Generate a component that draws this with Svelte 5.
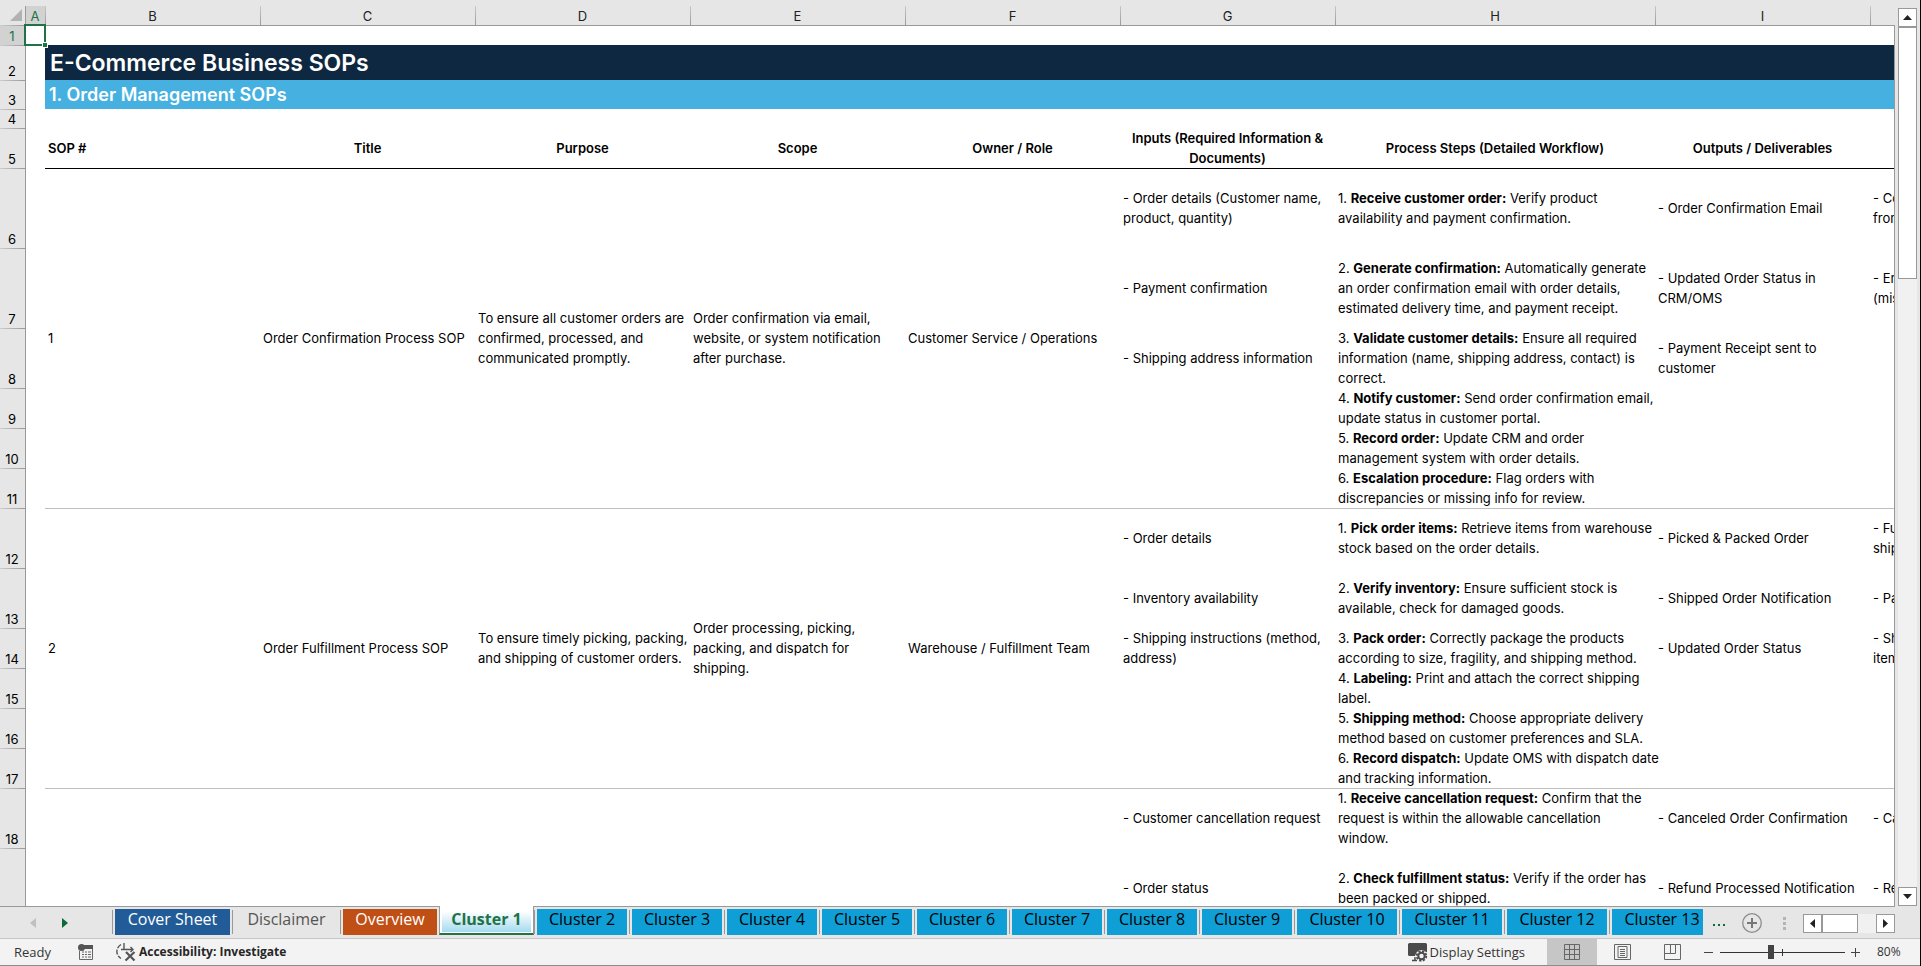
<script>
	const columns = [
		{ name: 'A', width: 20 },
		{ name: 'B', width: 215 },
		{ name: 'C', width: 215 },
		{ name: 'D', width: 215 },
		{ name: 'E', width: 215 },
		{ name: 'F', width: 215 },
		{ name: 'G', width: 215 },
		{ name: 'H', width: 320 },
		{ name: 'I', width: 215 },
		{ name: 'J', width: 215 }
	];

	const headings = [
		'Title',
		'Purpose',
		'Scope',
		'Owner / Role',
		'Inputs (Required Information &\nDocuments)',
		'Process Steps (Detailed Workflow)',
		'Outputs / Deliverables',
		''
	];

	// one entry per SOP; the first five cells are merged over all of its rows
	const sops = [
		{
			merged: [
				'1',
				'Order Confirmation Process SOP',
				'To ensure all customer orders are\nconfirmed, processed, and\ncommunicated promptly.',
				'Order confirmation via email,\nwebsite, or system notification\nafter purchase.',
				'Customer Service / Operations'
			],
			rows: [
				{
					height: 80,
					input: '- Order details (Customer name,\nproduct, quantity)',
					step: 'Receive customer order:',
					text: 'Verify product\navailability and payment confirmation.',
					output: '- Order Confirmation Email',
					next: '- Confirmation\nfrom'
				},
				{
					height: 80,
					input: '- Payment confirmation',
					step: 'Generate confirmation:',
					text: 'Automatically generate\nan order confirmation email with order details,\nestimated delivery time, and payment receipt.',
					output: '- Updated Order Status in\nCRM/OMS',
					next: '- Error\n(missing'
				},
				{
					height: 60,
					input: '- Shipping address information',
					step: 'Validate customer details:',
					text: 'Ensure all required\ninformation (name, shipping address, contact) is\ncorrect.',
					output: '- Payment Receipt sent to\ncustomer'
				},
				{
					height: 40,
					step: 'Notify customer:',
					text: 'Send order confirmation email,\nupdate status in customer portal.'
				},
				{
					height: 40,
					step: 'Record order:',
					text: 'Update CRM and order\nmanagement system with order details.'
				},
				{
					height: 40,
					step: 'Escalation procedure:',
					text: 'Flag orders with\ndiscrepancies or missing info for review.'
				}
			]
		},
		{
			merged: [
				'2',
				'Order Fulfillment Process SOP',
				'To ensure timely picking, packing,\nand shipping of customer orders.',
				'Order processing, picking,\npacking, and dispatch for\nshipping.',
				'Warehouse / Fulfillment Team'
			],
			rows: [
				{
					height: 60,
					input: '- Order details',
					step: 'Pick order items:',
					text: 'Retrieve items from warehouse\nstock based on the order details.',
					output: '- Picked & Packed Order',
					next: '- Fulfillment\nshipping'
				},
				{
					height: 60,
					input: '- Inventory availability',
					step: 'Verify inventory:',
					text: 'Ensure sufficient stock is\navailable, check for damaged goods.',
					output: '- Shipped Order Notification',
					next: '- Packed'
				},
				{
					height: 40,
					input: '- Shipping instructions (method,\naddress)',
					step: 'Pack order:',
					text: 'Correctly package the products\naccording to size, fragility, and shipping method.',
					output: '- Updated Order Status',
					next: '- Shipped\nitems'
				},
				{
					height: 40,
					step: 'Labeling:',
					text: 'Print and attach the correct shipping\nlabel.'
				},
				{
					height: 40,
					step: 'Shipping method:',
					text: 'Choose appropriate delivery\nmethod based on customer preferences and SLA.'
				},
				{
					height: 40,
					step: 'Record dispatch:',
					text: 'Update OMS with dispatch date\nand tracking information.'
				}
			]
		},
		{
			merged: ['', '', '', '', ''],
			rows: [
				{
					height: 60,
					input: '- Customer cancellation request',
					step: 'Receive cancellation request:',
					text: 'Confirm that the\nrequest is within the allowable cancellation\nwindow.',
					output: '- Canceled Order Confirmation',
					next: '- Canceled'
				},
				{
					height: 80,
					input: '- Order status',
					step: 'Check fulfillment status:',
					text: 'Verify if the order has\nbeen packed or shipped.',
					output: '- Refund Processed Notification',
					next: '- Refund'
				}
			]
		}
	];

	// sheet row numbers run on from the heading row
	let number = 6;
	for (const sop of sops) {
		for (const row of sop.rows) row.number = number++;
	}

	const tabs = [
		{ name: 'Cover Sheet', kind: 'cover', width: 115 },
		{ name: 'Disclaimer', kind: 'plain', width: 103 },
		{ name: 'Overview', kind: 'overview', width: 94 },
		{ name: 'Cluster 1', kind: 'active', width: 95 }
	];
	for (let i = 2; i <= 13; i++) {
		tabs.push({ name: `Cluster ${i}`, kind: 'cluster', width: i < 10 ? 90 : 100 });
	}

	let zoom = $state(40);
</script>

<div class="window">
	<main>
		<div class="sheet">
			<table>
				<colgroup>
					<col style="width: 25px" />
					{#each columns as column}
						<col style="width: {column.width}px" />
					{/each}
				</colgroup>
				<thead>
					<tr class="letters">
						<th class="corner">
							<svg width="12" height="12" viewBox="0 0 12 12"><path d="M12 0v12H0z" fill="#b2b2b2" /></svg>
						</th>
						{#each columns as column}
							<th class:selected={column.name === 'A'} scope="col">{column.name}</th>
						{/each}
					</tr>
				</thead>
				<tbody>
					<tr style="height: 20px">
						<th class="number selected" scope="row">1</th>
						<td class="edge"><div class="cursor"><i></i></div></td>
						<td colspan="9"></td>
					</tr>
					<tr style="height: 35px">
						<th class="number" scope="row">2</th>
						<td class="edge"></td>
						<td class="title" colspan="9">E-Commerce Business SOPs</td>
					</tr>
					<tr style="height: 29px">
						<th class="number" scope="row">3</th>
						<td class="edge"></td>
						<td class="subtitle" colspan="9">1. Order Management SOPs</td>
					</tr>
					<tr style="height: 19px">
						<th class="number" scope="row">4</th>
						<td class="edge"></td>
						<td colspan="9"></td>
					</tr>
					<tr class="headings" style="height: 40px">
						<th class="number" scope="row">5</th>
						<td class="edge"></td>
						<td class="first">SOP #</td>
						{#each headings as heading}
							<td>{heading}</td>
						{/each}
					</tr>
					{#each sops as sop, s}
						{#each sop.rows as row, r}
							<tr class:start={r === 0} class:dark={s === 0} style="height: {row.height}px">
								<th class="number" scope="row">{row.number}</th>
								<td class="edge"></td>
								{#if r === 0}
									{#each sop.merged as cell}
										<td rowspan={sop.rows.length}>{cell}</td>
									{/each}
								{/if}
								<td>{row.input ?? ''}</td>
								<td>{r + 1}. <b>{row.step}</b> {row.text}</td>
								<td>{row.output ?? ''}</td>
								<td>{row.next ?? ''}</td>
							</tr>
						{/each}
					{/each}
				</tbody>
			</table>
		</div>
		<div class="vertical">
			<button class="scroll" aria-label="Scroll up">
				<svg width="9" height="5" viewBox="0 0 9 5"><path d="M4.500 0L9 5H0z" /></svg>
			</button>
			<div class="track"><div class="thumb"></div></div>
			<button class="scroll" aria-label="Scroll down">
				<svg width="9" height="5" viewBox="0 0 9 5"><path d="M0 0h9L4.500 5z" /></svg>
			</button>
		</div>
	</main>

	<div class="tabbar">
		<div class="arrows">
			<button aria-label="Previous sheet">
				<svg width="6" height="10" viewBox="0 0 6 10"><path d="M6 0v10L0 5z" fill="#c0c0c0" /></svg>
			</button>
			<button aria-label="Next sheet">
				<svg width="6" height="10" viewBox="0 0 6 10"><path d="M0 0l6 5-6 5z" fill="#0b6a35" /></svg>
			</button>
		</div>
		<nav>
			{#each tabs as tab}
				<button class="tab {tab.kind}" style="width: {tab.width}px">{tab.name}</button>
			{/each}
		</nav>
		<div class="extras">
			<button class="more" aria-label="More sheets">
				<svg width="13" height="2" viewBox="0 0 13 2"><path d="M0 0h2v2H0zM5 0h2v2H5zM10 0h2v2h-2z" fill="#0b6a35" /></svg>
			</button>
			<button class="add" aria-label="New sheet">
				<svg width="20" height="20" viewBox="0 0 20 20" fill="none" stroke="#8c8c8c">
					<circle cx="10" cy="10" r="9.300" stroke-width="1.300" />
					<path d="M10 5v10M5 10h10" stroke="#777" stroke-width="2" />
				</svg>
			</button>
			<svg width="3" height="13" viewBox="0 0 3 13"><path d="M0 0h3v3H0zM0 5h3v3H0zM0 10h3v3H0z" fill="#b4b4b4" /></svg>
			<div class="horizontal">
				<button class="scroll" aria-label="Scroll left">
					<svg width="5" height="9" viewBox="0 0 5 9"><path d="M5 0v9L0 4.500z" /></svg>
				</button>
				<div class="track"><div class="thumb"></div></div>
				<button class="scroll" aria-label="Scroll right">
					<svg width="5" height="9" viewBox="0 0 5 9"><path d="M0 0l5 4.500L0 9z" /></svg>
				</button>
			</div>
		</div>
	</div>

	<footer>
		<span class="ready">Ready</span>
		<button class="macro" aria-label="Record macro">
			<svg width="15" height="16" viewBox="0 0 15 16">
				<path d="M5 1.500h9.500v14H1.500V7" fill="none" stroke="#666" />
				<path d="M5 1h10v4H5z" fill="#555" />
				<circle cx="3.500" cy="3.500" r="3.500" fill="#555" />
				<path d="M4 8h2M7 8h2M10 8h3M4 10.500h2M7 10.500h2M10 10.500h3M4 13h2M7 13h2M10 13h3" stroke="#666" />
			</svg>
		</button>
		<button class="access">
			<svg width="20" height="18" viewBox="0 0 20 18" fill="none" stroke="#555">
				<path d="M5 1.500C-.5 5-.5 12 5 15.500" stroke-width="1.400" stroke-dasharray="5 1.500" />
				<path d="M8 0v7M5 6.500h12M14.500 4L17 6.500 14.500 9" stroke-width="1.400" />
				<path d="M10 9l8.500 8.500M18.500 9L9.500 17.500" stroke-width="2.200" />
			</svg>
			Accessibility: Investigate
		</button>
		<button class="display">
			<svg width="20" height="19" viewBox="0 0 20 19">
				<path d="M1.500 0h16q1.500 0 1.500 1.500V9H9l-2 4H1.500Q0 13 0 11.500v-10Q0 0 1.500 0z" fill="#4a4a4a" />
				<path d="M4 17.500h5M7 14v3" stroke="#4a4a4a" stroke-width="1.500" />
				<circle cx="13.500" cy="13" r="6" fill="#f3f3f3" />
				<circle cx="13.500" cy="13" r="3.200" fill="none" stroke="#4a4a4a" stroke-width="2" />
				<circle cx="13.500" cy="13" r="4.800" fill="none" stroke="#4a4a4a" stroke-width="1.800" stroke-dasharray="2.200 1.570" />
			</svg>
			Display Settings
		</button>
		<div class="views">
			<button class="current" aria-label="Normal view">
				<svg width="16" height="16" viewBox="0 0 16 16" fill="none" stroke="#666"><path d="M.5.5h15v15H.5zM5.500.5v15M10.500.5v15M.5 5.500h15M.5 10.500h15" /></svg>
			</button>
			<button aria-label="Page layout view">
				<svg width="17" height="16" viewBox="0 0 17 16" fill="none" stroke="#666"><path d="M.5.5h16v15H.5zM4 2.500h9v11H4zM6 5.500h5M6 7.500h5M6 9.500h5M6 11.500h5" /></svg>
			</button>
			<button aria-label="Page break preview">
				<svg width="17" height="16" viewBox="0 0 17 16" fill="none" stroke="#666"><path d="M.5.5h16v15H.5zM.5 9.500h11V.5M6.500.5v9" /></svg>
			</button>
		</div>
		<button class="minus" aria-label="Zoom out">
			<svg width="9" height="9" viewBox="0 0 9 9"><path d="M0 4.500h9" stroke="#444" /></svg>
		</button>
		<input type="range" min="0" max="100" bind:value={zoom} aria-label="Zoom" />
		<button class="plus" aria-label="Zoom in">
			<svg width="9" height="9" viewBox="0 0 9 9"><path d="M0 4.500h9M4.500 0v9" stroke="#444" /></svg>
		</button>
		<button class="percent">80%</button>
	</footer>
</div>

<style>
	:global(body) {
		margin: 0;
	}

	.window {
		display: flex;
		flex-direction: column;
		height: 100vh;
		overflow: hidden;
		box-sizing: border-box;
		border-right: 1px solid #000;
		background-color: #e6e6e6;
		font-family: 'Open Sans', 'Noto Sans', sans-serif;
		font-size: 12px;
		color: #333;
	}

	button {
		display: flex;
		align-items: center;
		justify-content: center;
		flex: none;
		box-sizing: border-box;
		margin: 0;
		padding: 0;
		border: none;
		background: none;
		color: inherit;
		font: inherit;
		white-space: nowrap;
	}

	svg {
		display: block;
		flex: none;
	}

	main {
		display: flex;
		flex: 1;
		min-height: 0;
	}

	.sheet {
		flex: 1;
		min-width: 0;
		overflow: hidden;
		background-color: #fff;
	}

	table {
		width: 100%;
		table-layout: fixed;
		border-collapse: separate;
		border-spacing: 0;
		font-family: Inter, sans-serif;
		font-size: 13px;
		line-height: 20px;
		color: #000;
	}

	td {
		padding: 0 0 0 3px;
		white-space: pre;
		vertical-align: middle;
	}

	.letters {
		height: 25px;

		& th {
			padding: 7px 0 0;
			background: linear-gradient(#c8c8c8, #999) left bottom / 1px 19px no-repeat #e6e6e6;
			font-size: 13px;
			font-weight: 400;
			line-height: 18px;
			color: #222;
		}

		& .corner {
			background-image: none;
			padding: 5px 0 0 10px;
		}

		& .selected {
			background:
				linear-gradient(#999, #999) left bottom / 1px 19px no-repeat,
				linear-gradient(#d2d2d2, #d2d2d2) left bottom / 100% 19px no-repeat #e6e6e6;
			color: #217346;
		}
	}

	.number {
		padding: 0 1px 0 0;
		background: linear-gradient(90deg, #ccc, #999) left top / 100% 1px no-repeat #e6e6e6;
		font-size: 13px;
		font-weight: 400;
		line-height: 18px;
		text-align: center;
		vertical-align: bottom;

		&.selected {
			background-color: #d2d2d2;
			color: #217346;
		}
	}

	tbody tr:first-child td {
		box-shadow: inset 0 1px #999;
	}

	tbody td.edge,
	tbody tr:first-child td.edge {
		position: relative;
		padding: 0;
		box-shadow: inset 1px 0 #999;
	}

	/* selected cell frame with its fill handle */
	.cursor {
		position: absolute;
		inset: -1px;
		z-index: 1;
		border: 2px solid #217346;

		& i {
			position: absolute;
			right: -4px;
			bottom: -4px;
			width: 4px;
			height: 4px;
			border: 1px solid #fff;
			background-color: #217346;
		}
	}

	.title {
		padding: 2px 0 0 5px;
		background-color: #0f2841;
		color: #fff;
		font-size: 23px;
		font-weight: 600;
		line-height: 33px;
	}

	.subtitle {
		padding-left: 4px;
		background-color: #46b1e1;
		color: #fff;
		font-size: 18px;
		font-weight: 600;
		line-height: 29px;
	}

	.headings td {
		padding: 0;
		font-weight: 600;
		text-align: center;

		&.first {
			padding-left: 3px;
			text-align: left;
		}
	}

	.start td:not(.edge) {
		box-shadow: inset 0 1px #bfbfbf;
	}

	.start.dark td:not(.edge) {
		box-shadow: inset 0 1px #000;
	}

	.scroll {
		width: 19px;
		height: 19px;
		border: 1px solid #999;
		background-color: #fff;
		color: #222;

		& path {
			fill: currentColor;
		}
	}

	.track {
		flex: 1;
		background-color: #f1f1f1;
	}

	.thumb {
		box-sizing: border-box;
		border: 1px solid #999;
		background-color: #fff;
	}

	.vertical {
		display: flex;
		flex-direction: column;
		padding: 8px 3px 0 4px;
		background: linear-gradient(#e6e6e6 25px, #999 25px) left top / 1px 100% no-repeat;

		& .thumb {
			height: 252px;
		}
	}

	.tabbar {
		display: flex;
		flex: none;
		height: 32px;
		border-bottom: 1px solid #c6c6c6;
		background: linear-gradient(#999, #999) left top / calc(100% - 25px) 1px no-repeat;
	}

	.arrows {
		display: flex;
		align-items: center;
		gap: 26px;
		width: 82px;
		padding: 1px 0 0 30px;
	}

	nav {
		display: flex;
		flex: 1;
		min-width: 0;
		overflow: hidden;
		color: #000;
		font-size: 16px;
	}

	.tab {
		position: relative;
		height: 26px;
		margin: 3px 2px 0;
		padding-bottom: 6px;

		&:not(.active) {
			margin-left: 3px;
		}

		/* divider to the left of a tab */
		&:not(.active)::before {
			content: '';
			position: absolute;
			left: -3px;
			top: 1px;
			width: 1px;
			height: 24px;
			background-color: #999;
		}
	}

	.cover {
		background-color: #215c98;
		color: #fff;
	}

	.plain {
		color: #555;
	}

	.overview {
		background-color: #c04f15;
		color: #fff;
	}

	.cluster {
		background-color: #0f9ed5;
	}

	.active {
		height: 29px;
		margin: 0;
		padding-bottom: 1px;
		border: 1px solid #999;
		border-top: none;
		border-bottom: 2px solid #217346;
		background: linear-gradient(#fff 10%, #a5daef) center 3px / calc(100% - 4px) 23px no-repeat #fff;
		color: #217346;
		font-weight: 700;
	}

	.extras {
		display: flex;
		align-items: center;
		padding: 2px 25px 0 0;
	}

	.more {
		padding: 4px 16px 0 10px;
	}

	.add {
		margin-right: 21px;
	}

	.horizontal {
		display: flex;
		width: 92px;
		margin-left: 17px;

		& .track {
			display: flex;
		}

		& .thumb {
			width: 36px;
		}
	}

	footer {
		display: flex;
		flex: none;
		align-items: stretch;
		height: 26px;
		line-height: 26px;
		border-bottom: 1px solid #8c8c8c;
		background-color: #f3f3f3;
	}

	.ready {
		width: 64px;
		padding-left: 14px;
		font-size: 13px;
	}

	.access {
		gap: 3px;
		margin: 0 auto 0 23px;
		color: #262626;
		font-weight: 700;
	}

	.display {
		gap: 2px;
		margin-right: 22px;
		font-size: 13px;
	}

	.views {
		display: flex;

		& button {
			width: 50px;
		}

		& .current {
			background-color: #c6c6c6;
		}
	}

	.minus {
		width: 23px;
	}

	.plus {
		width: 21px;
	}

	.percent {
		justify-content: flex-start;
		width: 54px;
		padding-left: 11px;
	}

	input[type='range'] {
		appearance: none;
		width: 125px;
		margin: 0;
		/* the rail and its tick at 100% */
		background:
			linear-gradient(#333, #333) center / 100% 1px no-repeat,
			linear-gradient(#333, #333) center / 1px 7px no-repeat;

		&::-webkit-slider-thumb {
			appearance: none;
			width: 6px;
			height: 14px;
			background-color: #444;
		}
	}
</style>
